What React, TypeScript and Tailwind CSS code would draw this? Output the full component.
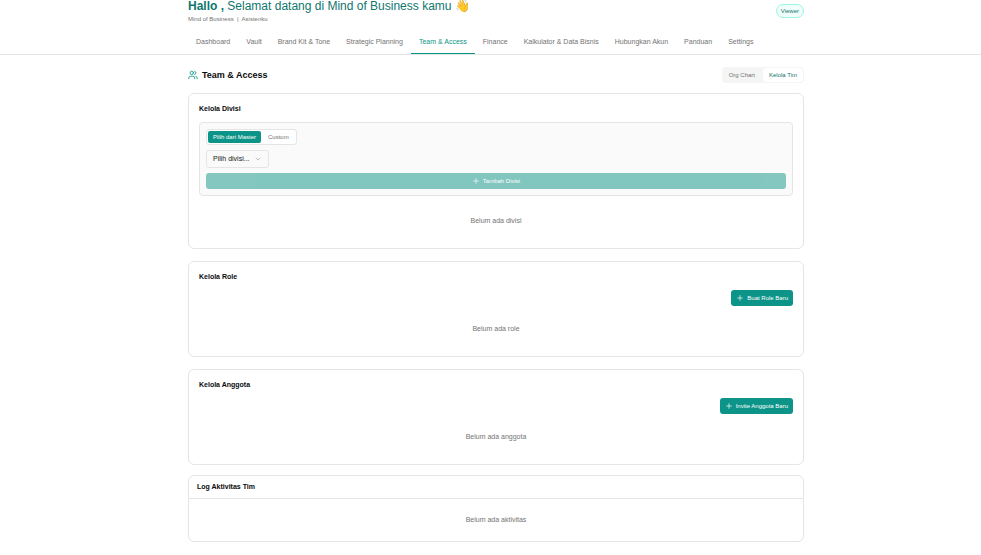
import { useState } from 'react'
import type { ReactNode } from 'react'
import { ChevronDown, Plus, Users } from 'lucide-react'

const tabs = [
  'Dashboard',
  'Vault',
  'Brand Kit & Tone',
  'Strategic Planning',
  'Team & Access',
  'Finance',
  'Kalkulator & Data Bisnis',
  'Hubungkan Akun',
  'Panduan',
  'Settings',
]

function Header() {
  return (
    <header className="border-b border-[#e5e5e5] pl-[11px]">
      <div className="mx-auto max-w-[640px] px-3">
        <div className="flex items-start justify-between">
          <div>
            <h1 className="text-[12px] leading-3 text-[#0f766e]">
              <span className="font-bold">Hallo ,</span> Selamat datang di Mind of Business kamu 👋
            </h1>
            <p className="mt-[3px] text-[6px] leading-2 text-[#737373]">
              Mind of Business &nbsp;|&nbsp; Asistenku
            </p>
          </div>
          <span className="mt-1 flex h-3.5 items-center rounded-full border border-[#99f6e4] bg-[#f0fdfa] px-1 text-[6px] text-[#0f766e]">
            Viewer
          </span>
        </div>
        <nav className="mt-[7px] flex h-6">
          {tabs.map((tab) => (
            <a
              key={tab}
              href="#"
              className={`flex items-center border-b px-2 pt-0.5 text-[7px] whitespace-nowrap ${
                tab === 'Team & Access'
                  ? 'border-[#0d9488] text-[#0d9488]'
                  : 'border-transparent text-[#737373]'
              }`}
            >
              {tab}
            </a>
          ))}
        </nav>
      </div>
    </header>
  )
}

function Card({ title, children }: { title: string; children: ReactNode }) {
  return (
    <section className="mb-3 rounded-md border border-[#e5e5e5] p-2.5">
      <h3 className="mb-2 text-[7px] leading-[10px] font-bold text-neutral-950">{title}</h3>
      {children}
    </section>
  )
}

function Empty({ children }: { children: ReactNode }) {
  return <p className="py-3 text-center text-[7px] leading-[10px] text-[#737373]">{children}</p>
}

function AddButton({ children }: { children: ReactNode }) {
  return (
    <button className="flex h-4 items-center gap-[3px] rounded-[3px] bg-[#0d9488] px-[5px] text-[6px] font-medium text-white">
      <Plus size={8} strokeWidth={2} />
      {children}
    </button>
  )
}

export default function App() {
  const [view, setView] = useState('tim')
  const [source, setSource] = useState('master')

  return (
    <div className="bg-white font-['Liberation_Sans',Arial,sans-serif]">
      <Header />
      <main className="pl-[11px]">
        <div className="mx-auto max-w-[640px] px-3 py-3">
          <div className="mb-2.5 flex h-4 items-center justify-between">
            <h2 className="flex items-center gap-1 text-[9px] leading-4 font-bold text-neutral-950">
              <Users size={10} strokeWidth={2} className="text-[#0d9488]" />
              Team & Access
            </h2>
            <div className="flex h-4 gap-0.5 rounded-[4px] bg-[#f5f5f5] p-px text-[6px]">
              <button
                onClick={() => setView('chart')}
                className={`rounded-[4px] px-1.5 ${view === 'chart' ? 'bg-white text-[#0f766e]' : 'text-[#737373]'}`}
              >
                Org Chart
              </button>
              <button
                onClick={() => setView('tim')}
                className={`rounded-[4px] px-1.5 ${view === 'tim' ? 'bg-white text-[#0f766e]' : 'text-[#737373]'}`}
              >
                Kelola Tim
              </button>
            </div>
          </div>

          <Card title="Kelola Divisi">
            <div className="mb-2 flex flex-col items-start gap-[5px] rounded-[4px] border border-[#e5e5e5] bg-[#fafafa] p-1.5">
              <div className="flex h-4 gap-px rounded-[3px] border border-[#e5e5e5] bg-white p-px text-[6px] font-medium">
                <button
                  onClick={() => setSource('master')}
                  className={`rounded-[2px] px-[5px] ${source === 'master' ? 'bg-[#0d9488] text-white' : 'text-[#737373]'}`}
                >
                  Pilih dari Master
                </button>
                <button
                  onClick={() => setSource('custom')}
                  className={`rounded-[2px] px-1.5 ${source === 'custom' ? 'bg-[#0d9488] text-white' : 'text-[#737373]'}`}
                >
                  Custom
                </button>
              </div>
              <div className="relative flex">
                <select
                  aria-label="Pilih divisi"
                  className="h-[18px] w-[63px] appearance-none rounded-[3px] border border-[#e5e5e5] bg-[#fafafa] px-1.5 text-[7px] text-neutral-900"
                >
                  <option>Pilih divisi...</option>
                </select>
                <ChevronDown
                  size={8}
                  strokeWidth={2}
                  className="pointer-events-none absolute top-[5px] right-[7px] text-neutral-400"
                />
              </div>
              <button
                disabled
                className="flex h-4 w-full items-center justify-center gap-[3px] rounded-[3px] bg-[#0d9488] text-[6px] font-medium text-white opacity-50"
              >
                <Plus size={8} strokeWidth={2} />
                Tambah Divisi
              </button>
            </div>
            <Empty>Belum ada divisi</Empty>
          </Card>

          <Card title="Kelola Role">
            <div className="mb-1.5 flex justify-end">
              <AddButton>Buat Role Baru</AddButton>
            </div>
            <Empty>Belum ada role</Empty>
          </Card>

          <Card title="Kelola Anggota">
            <div className="mb-1.5 flex justify-end">
              <AddButton>Invite Anggota Baru</AddButton>
            </div>
            <Empty>Belum ada anggota</Empty>
          </Card>

          <section className="-mt-0.5 rounded-md border border-[#e5e5e5]">
            <h3 className="border-b border-[#e5e5e5] px-2 py-1.5 text-[7px] leading-[10px] font-bold text-neutral-950">
              Log Aktivitas Tim
            </h3>
            <div className="py-1">
              <Empty>Belum ada aktivitas</Empty>
            </div>
          </section>
        </div>
      </main>
    </div>
  )
}
